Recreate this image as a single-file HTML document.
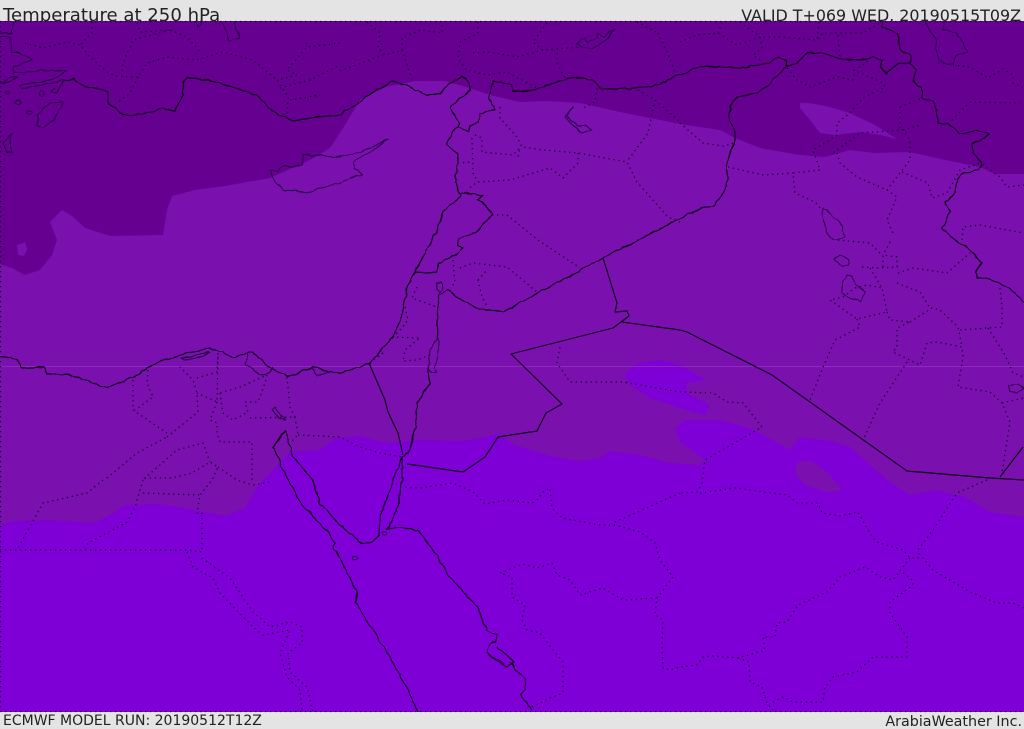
<!DOCTYPE html>
<html><head><meta charset="utf-8"><style>
html,body{margin:0;padding:0;background:#e4e4e4;width:1024px;height:729px;overflow:hidden}
svg{display:block}
text{font-family:"DejaVu Sans","Liberation Sans",sans-serif;fill:#222}
.c{fill:none;stroke:#0c0016;stroke-width:1.15;stroke-linejoin:round}
.t{fill:none;stroke:#22003c;stroke-width:.9;stroke-linejoin:round}
.d{fill:none;stroke:#14002a;stroke-width:1.3;stroke-dasharray:1.3 3.7}
</style></head><body>
<svg width="1024" height="729" viewBox="0 0 1024 729" xmlns="http://www.w3.org/2000/svg">
<defs>
<filter id="w" filterUnits="userSpaceOnUse" x="0" y="21" width="1024" height="691">
<feTurbulence type="fractalNoise" baseFrequency=".11" numOctaves="2" seed="4" result="n"/>
<feDisplacementMap in="SourceGraphic" in2="n" scale="4" xChannelSelector="R" yChannelSelector="G"/>
</filter>
<clipPath id="m"><rect x="0" y="21" width="1024" height="691"/></clipPath>
</defs>
<rect width="1024" height="729" fill="#e4e4e4"/>
<text x="3" y="21" font-size="18.1">Temperature at 250 hPa</text>
<text x="1021" y="21" font-size="15.9" text-anchor="end">VALID T+069 WED. 20190515T09Z</text>
<text x="3" y="725" font-size="14">ECMWF MODEL RUN: 20190512T12Z</text>
<text x="1022" y="726" font-size="14.3" text-anchor="end">ArabiaWeather Inc.</text>
<rect x="0" y="21" width="1024" height="691" fill="#7a10ae"/>
<path fill="#650091" d="M0 21H1024V174H995L980 167 945 160 910 152 875 153 850 150 825 157 800 155 760 148 735 138 720 130 680 124 620 112 580 103 545 101 520 102 490 95 470 88 445 81 415 81 385 87 360 100 345 125 330 148 310 160 270 178 225 186 195 190 172 196 167 210 163 235 110 236 85 228 72 216 62 210 50 222 57 240 52 255 40 270 25 275 12 268 0 264Z"/>
<path fill="#7a10ae" d="M800 103Q815 102 850 113L875 125 897 139 880 135 860 132 835 135 820 133 810 120 800 108Z"/>
<path fill="#7a10ae" d="M17 245L25 242 27 249 24 256 18 255Z"/>
<path fill="#7e00d6" d="M0 712V525L15 521 50 520 95 523 110 515 125 505 160 504 195 510 225 516 245 508 258 485 275 468 290 452 320 450 335 438 360 436 385 443 420 440 460 441 480 438 497 434 515 445 550 456 580 461 600 458 610 451 640 455 670 463 700 465 705 460 680 442 675 428 685 420 720 420 755 430 790 450 800 437 830 441 850 447 870 465 890 482 910 495 935 490 965 497 990 512 1024 517V712Z"/>
<path fill="#7e00d6" d="M625 375L635 364 660 360 680 365 706 380 685 383 690 395 710 405 705 415 680 408 650 398 630 385Z"/>
<path fill="#7a10ae" d="M796 465Q800 458 815 463L830 475 842 490 830 493 805 485 796 475Z"/>
<path stroke="#8a2bbd" stroke-width="1" d="M0 366.500H1024" fill="none"/>
<path class="d" d="M.5 21V712M0 21.500H1024M0 711.500H1024"/>
<g clip-path="url(#m)">
<g class="c" filter="url(#w)">
<path d="M63 80L73 79 83 87 97 88 108 92 108 103 120 112 133 116 147 113 163 108 175 111 183 95 183 82 188 78 213 81 233 87 257 95 273 112 293 121 317 117 340 115 345 110 355 105 372 93 392 81 405 85 427 95 440 94 448 85 462 76 470 83 471 90 450 107 459 123 457 127 468 132 470 126 478 123 480 113 495 110 489 98 493 81 512 85 513 91 533 91 545 85 567 79 577 77 593 80 600 88 627 89 657 85 680 75 702 66 725 68 743 68 768 63 778 56 786 60 787 67 797 64 807 53 823 53 843 60 860 61 873 57 882 60 880 68 886 73 900 63 910 63 911 55 900 50 898 33 882 27 882 21"/>
<path d="M787 67L758 93 737 97 730 107 729 118 735 133 735 143 730 150 727 163 727 185 715 205 702 208 680 219 638 240 603 258 503 312 480 309 463 301 448 290 439 295 437 330 438 340M428 368L430 383 417 403 416 427 408 453 403 457"/>
<path d="M910 63L916 70 913 82 922 87 922 98 935 103 938 123 947 123 960 133 977 131 990 134 972 144 973 153 982 163 978 170 963 173 957 183 955 192 945 202 950 213 942 228 955 240 968 248 982 263 975 272 978 279 990 279 1010 288 1024 302"/>
<path d="M457 127L452 132 447 145 457 153 458 163 455 177 459 193 460 197 443 212 440 223 432 240 422 258 415 272 407 287 402 317 392 338 370 363 340 373 333 373 313 367 287 377 267 365 252 352 233 357 210 348 173 357 157 363 133 377 107 388 93 383 72 375 47 374 43 367 22 368 17 359 0 357"/>
<path d="M459 193L475 193 483 195 478 200 488 208 492 215 475 233 460 238 458 245 462 247 455 255 438 263 437 272 427 273 415 272"/>
<path d="M285 430L273 448 288 480 300 502 328 532 335 543 333 548 340 558 350 578 357 593 355 602 373 630 390 657 410 693 418 712"/>
<path d="M285 430L293 457 313 480 320 503 340 525 362 543 372 543 379 535 380 515 390 490 393 480 402 457 402 480 398 507 388 530 395 527 418 530 437 555 450 577 477 607 487 630 497 635 495 643 490 643 487 653 507 667 513 663 507 655 497 647M510 663L525 680 525 690 520 695 532 710"/>
</g>
<g class="c">
<path d="M603 258L617 303 615 312 627 311 629 316 613 328 511 354 562 404 546 413 537 431 498 437 485 457 463 472 407 464M622 322L680 330 687 332 772 375 907 471 990 478 1024 480M1000 477L1023 447"/>
<path d="M369 363L385 400 388 412 398 433 403 455"/>
</g>
<g class="t" filter="url(#w)">
<path d="M270 170L278 172 283 167 302 165 303 154 340 157 360 152 388 140 362 157 353 162 355 168 363 176 352 177 340 183 320 188 307 193 298 191 283 190 275 182Z"/>
<path d="M430 350L429 363 428 368 432 373 437 372 435 367 438 357 439 342 437 340Z"/>
<path d="M437 283L442 282 443 288 440 292 436 289Z"/>
<path d="M924 21L935 37 938 58 947 65 953 63 957 55 968 52 957 33 943 30 943 21"/>
<path d="M823 208L822 213 827 233 833 240 845 237 843 228 827 210Z"/>
<path d="M835 260L840 255 848 260 848 265 843 267Z"/>
<path d="M847 275L842 282 842 293 853 299 860 302 865 292 855 283 852 276Z"/>
<path d="M577 42L585 38 587 42 597 38 598 33 603 37 615 28 608 38 592 50 580 47Z"/>
<path d="M573 107L565 117 572 125 582 133 592 129 585 126 577 126 567 117Z"/>
<path d="M38 113L37 125 43 128 55 118 63 102 50 103Z"/>
<path d="M12 133L3 143 7 153 12 152 10 140Z"/>
<path d="M222 23L230 41 241 38 233 23M193 21L198 28 202 21"/>
<path d="M13 21L12 33H0M0 37L10 38 12 53 20 53 32 60 13 67 13 73 23 72 67 70 53 80 20 85 22 89 53 83 63 80M55 88L50 92 57 93 63 81M0 83L10 78 18 78 8 82Z"/>
<ellipse cx="8" cy="93" rx="2.500" ry="1.500"/><ellipse cx="42" cy="93" rx="2.500" ry="3"/><ellipse cx="18" cy="102" rx="3" ry="2"/><ellipse cx="29" cy="112" rx="3" ry="1.500"/><ellipse cx="355" cy="558" rx="3" ry="1.500"/><ellipse cx="385" cy="534" rx="2" ry="2"/>
<path d="M182 358L210 352 203 357 185 359ZM248 353L245 365 260 375 270 373 272 366M290 376L313 368 317 375 330 372M272 410L275 408 285 420 280 418Z"/>
<path d="M1008 385L1018 384 1023 388 1017 393 1010 392Z"/>
<path d="M490 643L487 653 500 660 505 664"/>
</g>
<g class="d">
<path d="M25 43L43 48 67 42 80 45 90 57 107 72 115 76 138 77 147 63 167 57 197 60 223 52 253 60 277 80 288 97 287 118"/>
<path d="M92 22V33L80 45M137 23L140 32 170 30 187 37 200 52M170 30L133 40 123 63 122 73M138 77L130 93 118 102"/>
<path d="M340 43L307 47 287 70 297 75 277 80M280 88L310 80 340 65M290 100L320 95"/>
<path d="M367 22L380 33 378 48 385 55 402 50 402 38 420 30 442 33 442 22M340 71L383 55M402 50L413 82"/>
<path d="M478 22V33L460 42 458 58 466 70 487 75 507 72 537 88M473 53L490 52 517 57 543 50 580 47M543 50L533 42 547 23M557 53V63L565 78M658 33L667 52 675 72M637 22L658 33M597 88L595 102 583 108M638 90L655 100 680 122M655 100L648 133 628 160"/>
<path d="M500 107V118L517 137 522 147 543 150 578 153 627 162 637 182 668 217 680 222M475 135L482 138V152L513 155 520 148 518 157M578 153V163L563 178 550 168 510 180 477 182 467 190M472 138L473 173 478 182M458 163L473 162"/>
<path d="M492 215H507L538 240 580 268M453 260L455 283 450 288M460 268L473 263 507 267 537 292M478 280L482 297 488 308M478 280L487 270"/>
<path d="M417 287L412 298 437 307M405 307L408 320 402 328 393 337 420 338 405 350 403 361 417 360 430 355M383 353L370 363"/>
<path d="M680 42L697 35 718 33 737 45 760 37 783 37 817 40 823 33 863 33 880 23M718 33L722 23M740 22L760 37 762 48 753 55 760 60M819 22L817 40M838 35L840 58"/>
<path d="M787 68L797 80 810 87 837 77 853 80 855 70 870 60M853 70L883 83 885 87 863 98 850 113 837 123 837 135 813 150 820 170 793 173 795 193 815 202 822 210M680 123L703 143 723 146 735 143M728 167L763 175 793 173"/>
<path d="M837 153L840 163 857 177 887 190 910 160 910 140 903 130 860 133 833 153M903 130L920 125M900 107L922 98M900 107V130M887 190L897 197 887 220 893 233M902 172L928 183 932 198 947 193 960 170 980 163 1000 177 1007 187 1024 185"/>
<path d="M938 63L970 67 988 78 1003 69 1013 75V83L1024 88M952 120L970 102 1020 103M962 240L963 227 980 225 1024 233"/>
<path d="M862 267L880 268 897 267V257L883 255V268M880 253L870 243 837 240M890 242L883 255M870 268L882 288 887 312 857 319 830 300 843 297 855 288 867 285 882 288M857 319L860 327 835 340 823 367 810 400"/>
<path d="M887 312L890 320 910 322 897 328V347L893 352 920 365 927 343 937 342 962 347 963 357 958 387 990 392 1002 403 1010 422 1002 473M910 322L932 308 940 310 958 327 962 347M907 362L880 403 863 440M898 273L913 268 947 273 970 253M897 283L920 292 930 308M960 330L1002 327V307L1000 288M988 328L1005 355 1013 373 1024 377M1002 403L1024 398"/>
<path d="M560 347L557 363 570 382 623 382 680 392 713 393 727 402 743 403 762 427 705 460 702 483 697 492 680 493M700 493L735 488 787 495 797 503 818 503 822 513 840 516 858 512 872 537 877 542 903 550 910 558 923 558 933 570 970 592 997 603 1013 603 1024 608M987 480L957 493 933 530 918 550 920 558"/>
<path d="M910 558L902 568 893 580 880 577 865 567 840 577 827 592 798 605 787 622 777 623 775 637 763 637 765 650 738 658 713 656 703 657 697 665 680 667 670 670 663 668 662 643 663 620 655 615 657 598 673 577 660 560 655 543 640 532 615 525 600 525 562 518 552 508 550 488 543 492 537 500 532 503 507 500 485 504 473 492 453 483 420 488 402 487M738 658L749 662 750 682 762 687 767 703 773 710M773 702L783 697 793 702 823 702 825 687 833 677 857 672 873 657 907 657 907 637 890 613 890 602 913 585 912 580 902 572"/>
<path d="M615 522L680 493M657 598L623 600 603 588 580 595 570 580 557 575 552 563 537 568 523 564 500 573 512 577V597L525 605 522 620 527 630 540 633 553 650 563 662V693L550 698 532 707"/>
<path d="M0 550H187L202 552V513L197 513 200 495 212 480 218 467 210 462 192 473 172 478 145 478 177 450 203 443 210 462M143 493L200 495M143 480L135 507 127 522 88 543 85 548M103 480L87 493 43 503 18 548M187 552L193 567 213 578 220 593 253 627 263 635 290 630 280 653 287 677 300 690 302 710M202 558L230 578 253 612 270 627 290 622 302 627V643L288 653 290 672 307 687 313 712"/>
<path d="M133 380V410L167 433M148 370L147 383 153 397 135 410M167 437L198 412 197 393 193 380 180 367M107 478L137 453 167 437M197 378L217 372 218 353 217 402 197 393M217 402L210 420 217 423V433L220 442H252V480M220 393L223 413 233 420 248 412 245 402H258L265 383 267 375 240 387 220 393M250 418L295 417 298 435 290 443M287 377L290 407 295 417M298 435L340 437 360 447 380 453 403 457M218 467L237 480 253 485 270 482"/>
</g>
</g>
</svg>
</body></html>
